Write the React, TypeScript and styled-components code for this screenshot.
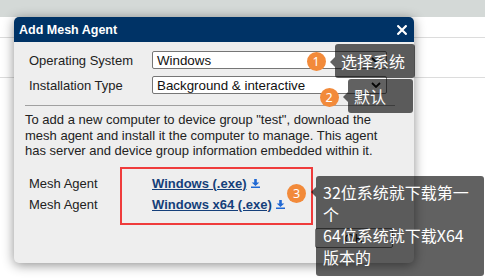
import React from "react";
import styled, { createGlobalStyle } from "styled-components";

const GlobalStyle = createGlobalStyle`
  html, body { margin: 0; padding: 0; background: #fff; }
  body { font-family: "Liberation Sans", Arial, sans-serif; }
`;

const Page = styled.div`
  position: relative;
  width: 485px;
  height: 279px;
  overflow: hidden;
  background: #fff;
`;

const TopBand = styled.div`
  height: 17px;
  background: #d4d9d7;
`;

const BgRow = styled.div<{ $h: number }>`
  height: ${(p) => p.$h}px;
  border-bottom: 1px solid #dcdcdc;
`;

const Dialog = styled.div`
  position: absolute;
  left: 14px;
  top: 17px;
  width: 400px;
  height: 246px;
  display: flex;
  flex-direction: column;
  background: #eeeeee;
  border-radius: 5px;
  box-shadow: 0 2px 12px rgba(0, 0, 0, 0.45);
`;

const TitleBar = styled.div`
  height: 25px;
  flex: none;
  display: flex;
  align-items: center;
  justify-content: space-between;
  padding: 0 7px 0 5px;
  background: #003366;
  color: #fff;
  font-weight: bold;
  font-size: 12.5px;
  border-radius: 5px 5px 0 0;
`;

const Body = styled.div`
  flex: 1;
  display: flex;
  flex-direction: column;
  padding: 9px 19px 15px 11px;
  font-size: 13px;
  color: #222;
`;

const FormGrid = styled.div`
  display: grid;
  grid-template-columns: 123px 235px;
  row-gap: 7px;
  padding-left: 4px;
  align-items: center;
`;

const Label = styled.div`
  font-size: 13px;
  color: #222;
`;

const SelectBox = styled.div`
  height: 18px;
  box-sizing: border-box;
  border: 1px solid #767676;
  border-radius: 2px;
  background: #fff;
  display: flex;
  align-items: center;
  justify-content: space-between;
  padding: 0 5px 0 4px;
  font-size: 13.33px;
  color: #111;
`;

const Separator = styled.div`
  margin-top: 11px;
  border-top: 1px solid #a0a0a0;
`;

const Description = styled.p`
  margin: 6px 0 0;
  line-height: 15.5px;
  font-size: 13px;
  color: #222;
`;

const AgentGrid = styled.div`
  margin-top: 14px;
  display: grid;
  grid-template-columns: 123px auto;
  grid-auto-rows: 21px;
  padding-left: 4px;
  align-items: center;
`;

const LinkCell = styled.div`
  display: flex;
  align-items: center;
  gap: 4px;
`;

const AgentLink = styled.a`
  font-weight: bold;
  font-size: 13px;
  color: #153f7a;
  text-decoration: underline;
  cursor: pointer;
`;

const ButtonRow = styled.div`
  margin-top: auto;
  display: flex;
  justify-content: flex-end;
  padding-right: 2px;
`;

const OkButton = styled.button`
  width: 78px;
  height: 20px;
  box-sizing: border-box;
  border: 1px solid #767676;
  border-radius: 2px;
  background: #efefef;
  font-family: "Liberation Sans", Arial, sans-serif;
  font-size: 13px;
  color: #111;
  padding: 0;
`;

const RedBox = styled.div`
  position: absolute;
  left: 120px;
  top: 167px;
  width: 193px;
  height: 58px;
  box-sizing: border-box;
  border: 2px solid #ef3b3b;
`;

const Badge = styled.div<{ $x: number; $y: number }>`
  position: absolute;
  left: ${(p) => p.$x}px;
  top: ${(p) => p.$y}px;
  width: 19px;
  height: 19px;
  border-radius: 50%;
  background: #f28a3a;
  color: #fff;
  font-family: "Noto Sans", sans-serif;
  font-size: 12.5px;
  display: flex;
  align-items: center;
  justify-content: center;
`;

const Tip = styled.div<{ $x: number; $y: number; $w: number; $h: number; $arrow: number }>`
  position: absolute;
  left: ${(p) => p.$x}px;
  top: ${(p) => p.$y}px;
  width: ${(p) => p.$w}px;
  height: ${(p) => p.$h}px;
  box-sizing: border-box;
  background: rgba(0, 0, 0, 0.62);
  color: #fff;
  border-radius: 3px;
  font-family: "Noto Sans CJK SC", "Noto Sans", sans-serif;
  font-size: 16px;
  white-space: nowrap;
  &::before {
    content: "";
    position: absolute;
    left: -5px;
    top: ${(p) => p.$arrow - 5}px;
    border-top: 5px solid transparent;
    border-bottom: 5px solid transparent;
    border-right: 5px solid rgba(0, 0, 0, 0.62);
  }
`;

const TipLine = styled.div`
  padding-left: 6px;
  line-height: 34px;
`;

const TipBlock = styled.div`
  padding: 6px 7px;
  line-height: 21.6px;
`;

const CloseIcon = () => (
  <svg width="10" height="10" viewBox="0 0 10 10">
    <path d="M1.2 1.2 L8.8 8.8 M8.8 1.2 L1.2 8.8" stroke="#fff" strokeWidth="2.2" strokeLinecap="square" />
  </svg>
);

const Chevron = () => (
  <svg width="10" height="6" viewBox="0 0 10 6">
    <path d="M1 1 L5 5 L9 1" stroke="#111" strokeWidth="1.8" fill="none" />
  </svg>
);

const DownloadIcon = () => (
  <svg width="9" height="9" viewBox="0 0 9 9">
    <path d="M3.2 0h2.6v3.4h2.5L4.5 7 0.7 3.4h2.5z M0 7.4h9v1.6H0z" fill="#1f68d4" />
  </svg>
);

export default function App() {
  return (
    <>
      <GlobalStyle />
      <Page>
        <TopBand />
        <BgRow $h={20} />
        <BgRow $h={39} />
        <Dialog>
          <TitleBar>
            <span>Add Mesh Agent</span>
            <CloseIcon />
          </TitleBar>
          <Body>
            <FormGrid>
              <Label>Operating System</Label>
              <SelectBox>
                <span>Windows</span>
                <Chevron />
              </SelectBox>
              <Label>Installation Type</Label>
              <SelectBox>
                <span>Background &amp; interactive</span>
                <Chevron />
              </SelectBox>
            </FormGrid>
            <Separator />
            <Description>
              To add a new computer to device group "test", download the mesh agent and install it the
              computer to manage. This agent has server and device group information embedded within it.
            </Description>
            <AgentGrid>
              <Label>Mesh Agent</Label>
              <LinkCell>
                <AgentLink>Windows (.exe)</AgentLink>
                <DownloadIcon />
              </LinkCell>
              <Label>Mesh Agent</Label>
              <LinkCell>
                <AgentLink>Windows x64 (.exe)</AgentLink>
                <DownloadIcon />
              </LinkCell>
            </AgentGrid>
            <ButtonRow>
              <OkButton>OK</OkButton>
            </ButtonRow>
          </Body>
        </Dialog>
        <RedBox />
        <Badge $x={306.5} $y={52}>1</Badge>
        <Badge $x={319.5} $y={87.5}>2</Badge>
        <Badge $x={287} $y={184}>3</Badge>
        <Tip $x={335} $y={44} $w={80} $h={34} $arrow={18}>
          <TipLine>选择系统</TipLine>
        </Tip>
        <Tip $x={348} $y={79} $w={65} $h={34} $arrow={18}>
          <TipLine>默认</TipLine>
        </Tip>
        <Tip $x={316} $y={176} $w={168} $h={100} $arrow={16}>
          <TipBlock>
            32位系统就下载第一
            <br />个<br />
            64位系统就下载X64
            <br />
            版本的
          </TipBlock>
        </Tip>
      </Page>
    </>
  );
}
